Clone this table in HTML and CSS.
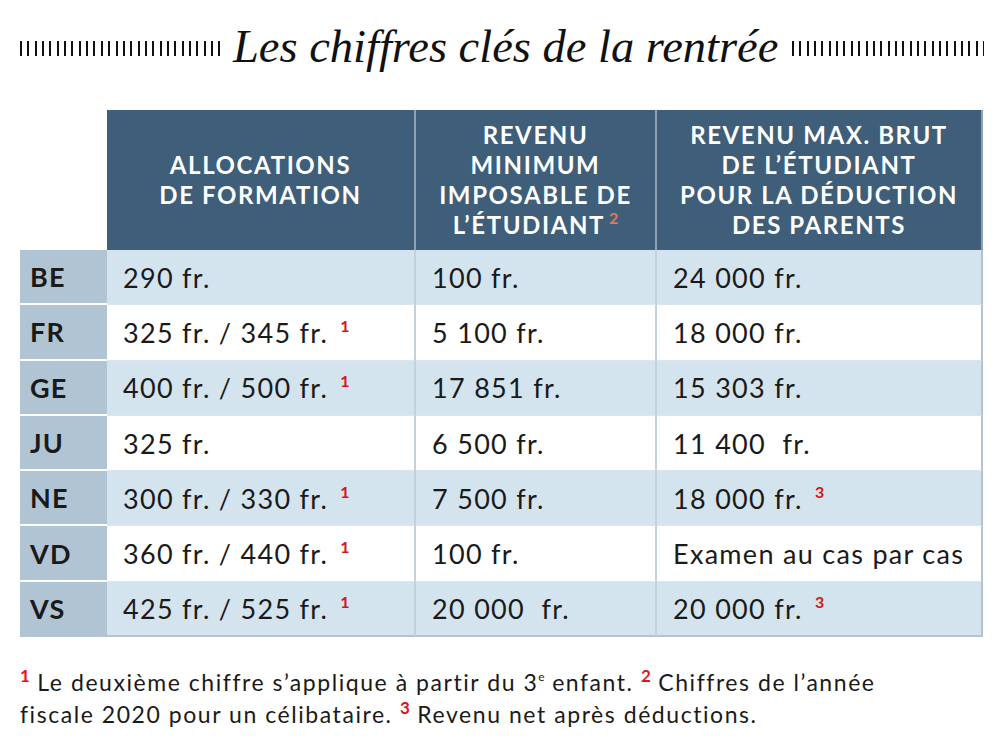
FILE: index.html
```html
<!DOCTYPE html>
<html lang="fr">
<head>
<meta charset="utf-8">
<title>Les chiffres clés de la rentrée</title>
<link rel="stylesheet" href="styles.css">
</head>
<body>
<div class="page">
  <div class="title-row">
    <span class="ticks ticks-left"></span>
    <h1 class="title">Les chiffres clés de la rentrée</h1>
    <span class="ticks ticks-right"></span>
  </div>

  <div class="grid">
    <div class="corner"></div>
    <div class="head"><span>ALLOCATIONS<br>DE FORMATION</span></div>
    <div class="head"><span>REVENU<br>MINIMUM<br>IMPOSABLE DE<br>L’ÉTUDIANT<sup class="hnote">2</sup></span></div>
    <div class="head last"><span>REVENU MAX. BRUT<br>DE L’ÉTUDIANT<br>POUR LA DÉDUCTION<br>DES PARENTS</span></div>

    <div class="lab">BE</div>
    <div class="cell tint"><span>290 fr.</span></div>
    <div class="cell tint"><span>100 fr.</span></div>
    <div class="cell tint last"><span>24 000 fr.</span></div>

    <div class="lab">FR</div>
    <div class="cell"><span>325 fr. / 345 fr. <sup class="note">1</sup></span></div>
    <div class="cell"><span>5 100 fr.</span></div>
    <div class="cell last"><span>18 000 fr.</span></div>

    <div class="lab">GE</div>
    <div class="cell tint"><span>400 fr. / 500 fr. <sup class="note">1</sup></span></div>
    <div class="cell tint"><span>17 851 fr.</span></div>
    <div class="cell tint last"><span>15 303 fr.</span></div>

    <div class="lab">JU</div>
    <div class="cell"><span>325 fr.</span></div>
    <div class="cell"><span>6 500 fr.</span></div>
    <div class="cell last"><span>11 400&nbsp; fr.</span></div>

    <div class="lab">NE</div>
    <div class="cell tint"><span>300 fr. / 330 fr. <sup class="note">1</sup></span></div>
    <div class="cell tint"><span>7 500 fr.</span></div>
    <div class="cell tint last"><span>18 000 fr. <sup class="note">3</sup></span></div>

    <div class="lab">VD</div>
    <div class="cell"><span>360 fr. / 440 fr. <sup class="note">1</sup></span></div>
    <div class="cell"><span>100 fr.</span></div>
    <div class="cell last"><span>Examen au cas par cas</span></div>

    <div class="lab bottom">VS</div>
    <div class="cell tint bottom"><span>425 fr. / 525 fr. <sup class="note">1</sup></span></div>
    <div class="cell tint bottom"><span>20 000&nbsp; fr.</span></div>
    <div class="cell tint bottom last"><span>20 000 fr. <sup class="note">3</sup></span></div>
  </div>

  <p class="foot"><sup class="fnote">1</sup> Le deuxième chiffre s’applique à partir du 3<sup class="ord">e</sup> enfant. <sup class="fnote">2</sup> Chiffres de l’année<br>fiscale 2020 pour un célibataire. <sup class="fnote">3</sup> Revenu net après déductions.</p>
</div>
</body>
</html>
```

FILE: styles.css
```css
* { box-sizing: border-box; }

body {
  margin: 0;
  background: #ffffff;
  color: #1a1a1a;
  font-family: "Lato", "Liberation Sans", sans-serif;
}

.page {
  padding: 22px 0 0 20px;
  width: 1000px;
}

.title-row {
  display: flex;
  align-items: center;
  height: 50px;
}

.ticks {
  display: block;
  height: 15px;
  margin-top: 2px;
  background: repeating-linear-gradient(to right, #111 0 2px, transparent 2px 7.35px);
}
.ticks-left { width: 200px; }
.ticks-right { width: 192px; }

.title {
  margin: 0 14px 0 13px;
  font-family: "Liberation Serif", "DejaVu Serif", serif;
  font-style: italic;
  font-weight: normal;
  font-size: 46.5px;
  line-height: 50px;
  color: #111;
  white-space: nowrap;
}

.grid {
  margin-top: 38px;
  display: grid;
  grid-template-columns: 87px 309px 241px 326px;
  grid-template-rows: 140px repeat(7, 55.3px);
  width: 963px;
}

.head {
  background: #3e5e79;
  color: #ffffff;
  font-weight: 700;
  font-size: 24px;
  letter-spacing: 1.6px;
  line-height: 30px;
  text-align: center;
  display: flex;
  align-items: center;
  justify-content: center;
  border-right: 2px solid #8ea3b6;
}

.hnote {
  color: #e2785a;
  font-size: 16px;
  line-height: 0;
  vertical-align: 10px;
  letter-spacing: 0;
  margin-left: 4px;
}

.lab {
  background: #b1c4d4;
  font-size: 27px;
  font-weight: 700;
  letter-spacing: 1.2px;
  padding-left: 10px;
  display: flex;
  align-items: center;
  border-bottom: 2px solid #ffffff;
}
.lab.bottom { border-bottom: 2px solid #b4c3d1; }

.cell {
  background: #ffffff;
  font-size: 27px;
  letter-spacing: 1.3px;
  padding-left: 16px;
  display: flex;
  align-items: center;
  white-space: nowrap;
  border-right: 2px solid #c3d1dd;
  border-bottom: 1px solid #dbe5ee;
}
.cell.tint { background: #d4e4ef; }
.cell.last { border-right: 2px solid #b4c3d1; }
.cell.bottom { border-bottom: 2px solid #b4c3d1; }

.note {
  color: #d3161d;
  font-weight: 700;
  font-size: 16px;
  letter-spacing: 0;
  line-height: 0;
  vertical-align: 11px;
  margin-left: 4px;
}

.foot {
  margin: 29px 0 0 0;
  font-size: 23px;
  letter-spacing: 1.55px;
  line-height: 32px;
  color: #1a1a1a;
}

.fnote {
  color: #e0141c;
  font-weight: 700;
  font-size: 17px;
  letter-spacing: 0;
  line-height: 0;
  vertical-align: 9px;
}

.ord {
  font-size: 12px;
  letter-spacing: 0;
  line-height: 0;
  vertical-align: 10px;
}
```
